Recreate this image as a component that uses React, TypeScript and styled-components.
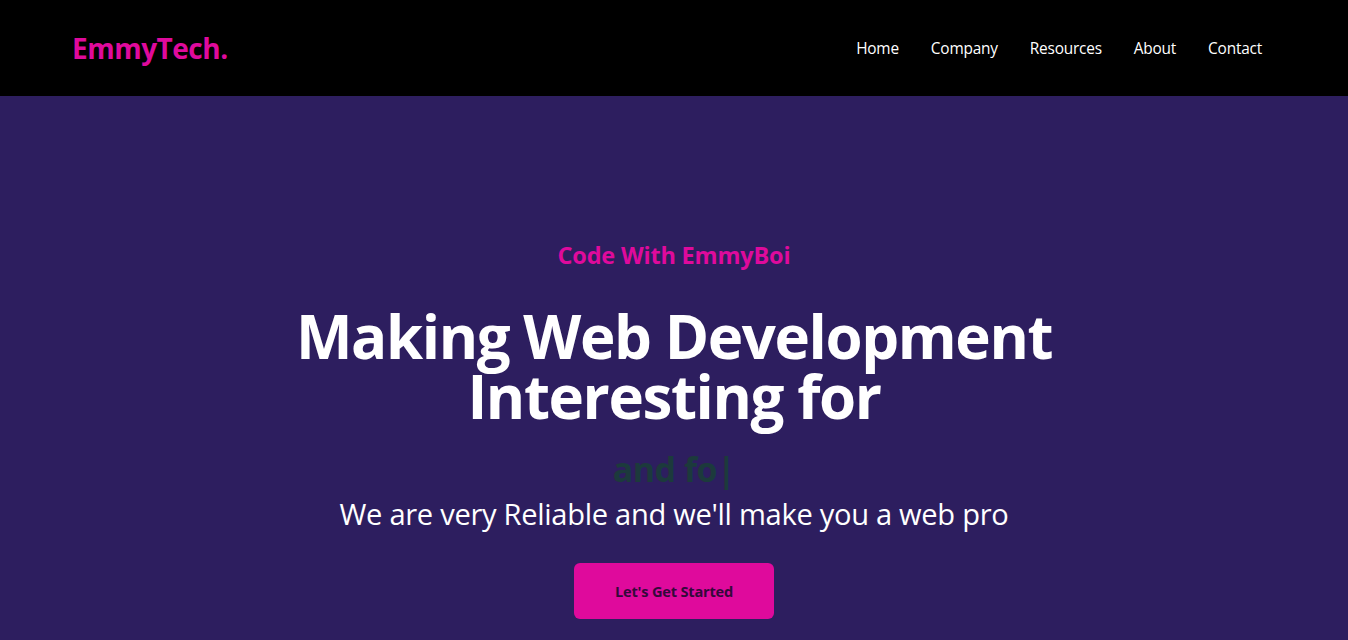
import React from "react";
import styled, { createGlobalStyle } from "styled-components";

const Global = createGlobalStyle`
  html, body { margin: 0; padding: 0; background: #2d1e5f; }
  body { font-family: "Open Sans", "Noto Sans", sans-serif; }
  * { box-sizing: border-box; }
`;

const Nav = styled.nav`
  height: 96px;
  background: #000;
  display: flex;
  align-items: center;
  justify-content: space-between;
  padding: 0 86px 0 72px;
`;

const Logo = styled.h1`
  margin: 0;
  font-size: 28px;
  font-weight: 700;
  color: #df0a9c;
  letter-spacing: -0.5px;
`;

const Menu = styled.ul`
  display: flex;
  list-style: none;
  margin: 0;
  padding: 0;
  gap: 32px;
`;

const MenuItem = styled.li`
  color: #fff;
  font-size: 15.4px;
  letter-spacing: -0.2px;
`;

const Hero = styled.section`
  background: #2d1e5f;
  min-height: 544px;
  display: flex;
  flex-direction: column;
  align-items: center;
  text-align: center;
  padding-top: 143px;
`;

const Kicker = styled.p`
  margin: 0;
  color: #df0a9c;
  font-weight: 700;
  font-size: 23.5px;
  letter-spacing: -0.2px;
`;

const Title = styled.h2`
  margin: 35px 0 0;
  color: #fff;
  font-weight: 700;
  font-size: 60px;
  line-height: 60px;
  letter-spacing: -1.4px;
`;

const Typed = styled.p`
  margin: 23px 0 0;
  color: #1c3a3c;
  font-weight: 700;
  font-size: 34px;
  line-height: 40px;
  letter-spacing: -0.5px;
`;

const Sub = styled.p`
  margin: 6px 0 0;
  color: #fff;
  font-size: 29.1px;
  line-height: 38px;
  letter-spacing: -0.3px;
`;

const Button = styled.button`
  margin-top: 30px;
  width: 200px;
  height: 56px;
  border: none;
  border-radius: 6px;
  background: #df0a9c;
  color: #33093a;
  font-family: inherit;
  font-weight: 700;
  font-size: 14.6px;
  letter-spacing: -0.2px;
`;

export default function App() {
  return (
    <>
      <Global />
      <Nav>
        <Logo>EmmyTech.</Logo>
        <Menu>
          <MenuItem>Home</MenuItem>
          <MenuItem>Company</MenuItem>
          <MenuItem>Resources</MenuItem>
          <MenuItem>About</MenuItem>
          <MenuItem>Contact</MenuItem>
        </Menu>
      </Nav>
      <Hero>
        <Kicker>Code With EmmyBoi</Kicker>
        <Title>
          Making Web Development
          <br />
          Interesting for
        </Title>
        <Typed>and fo|</Typed>
        <Sub>We are very Reliable and we'll make you a web pro</Sub>
        <Button>Let's Get Started</Button>
      </Hero>
    </>
  );
}
